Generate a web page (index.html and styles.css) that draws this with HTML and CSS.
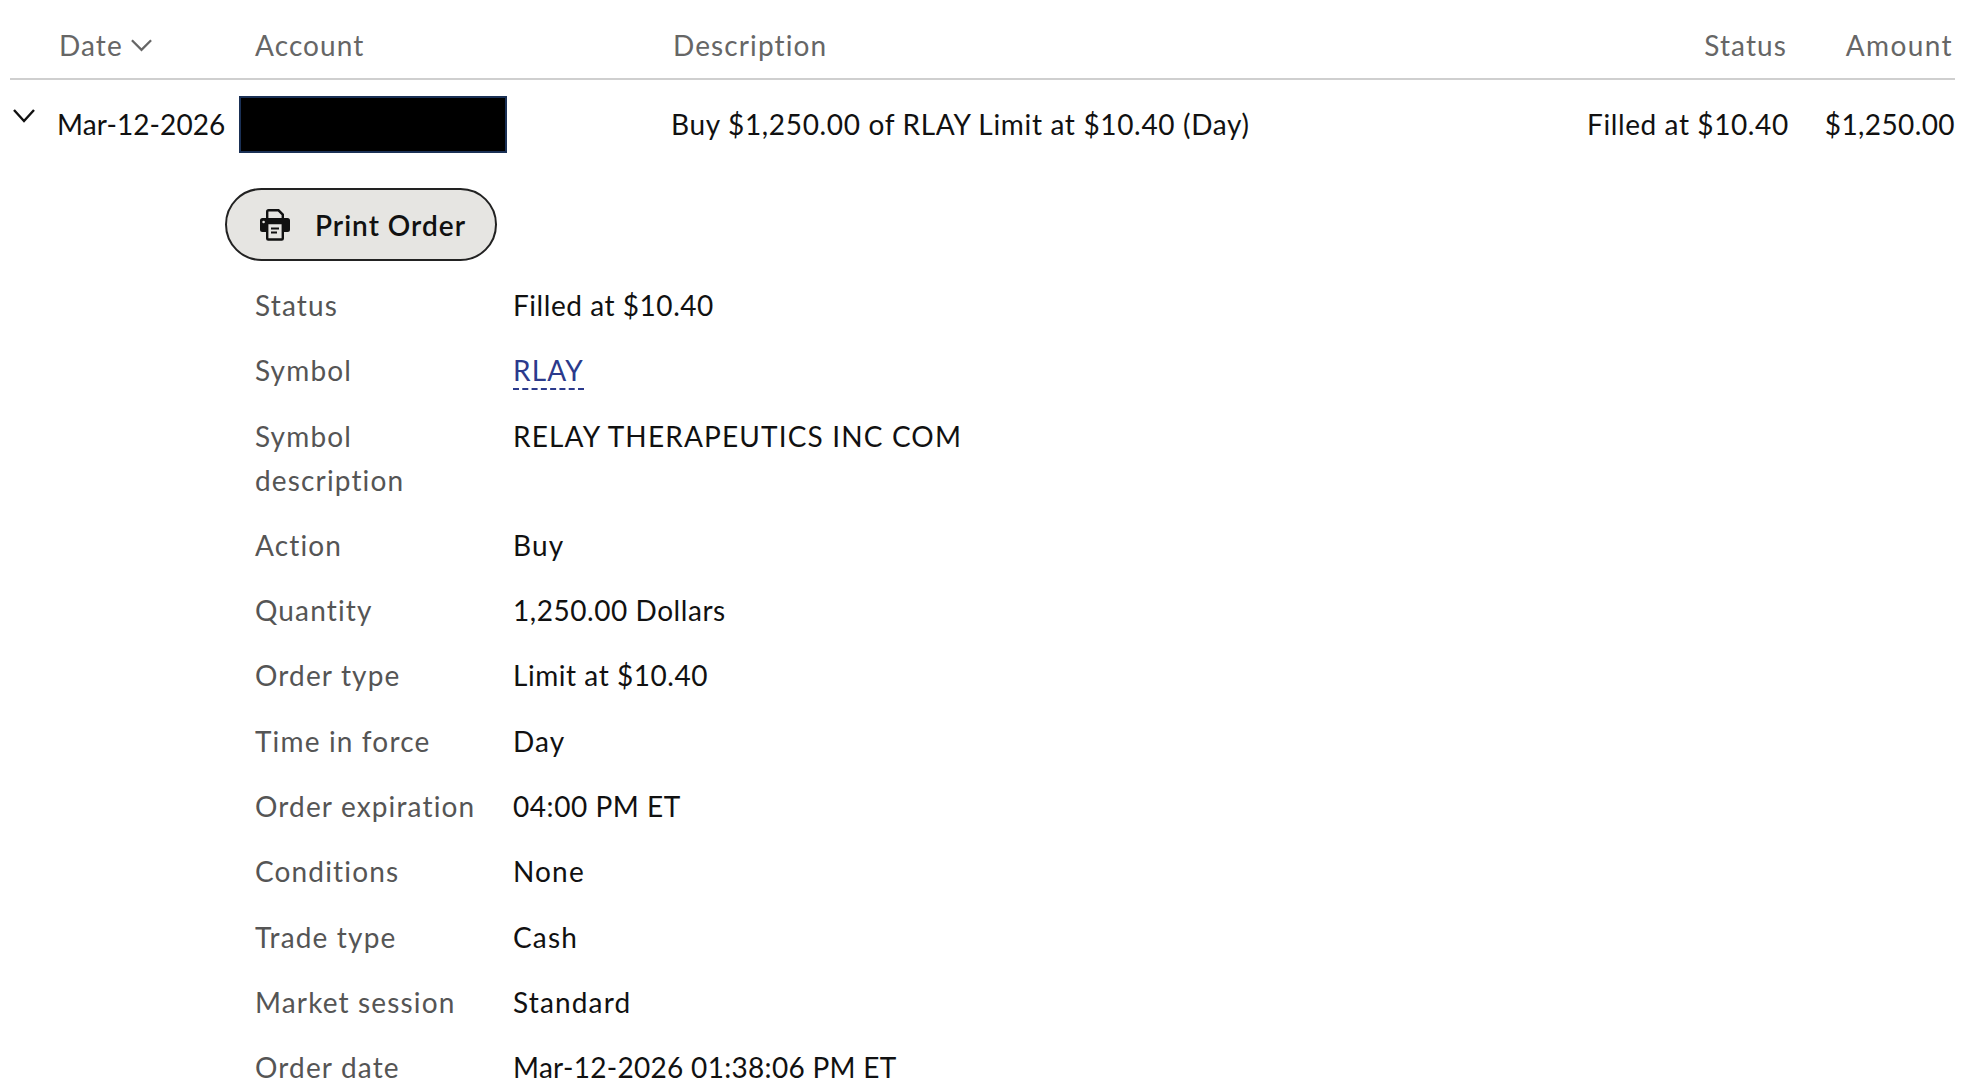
FILE: index.html
```html
<!DOCTYPE html>
<html lang="en">
<head>
<meta charset="utf-8">
<title>Orders</title>
<link rel="stylesheet" href="styles.css">
</head>
<body>
<div class="head">
  <div class="c-date sort">Date
    <svg class="sort-icon" viewBox="0 0 24 14" aria-hidden="true"><path d="M2 2l10 10L22 2"/></svg>
  </div>
  <div class="c-account">Account</div>
  <div class="c-desc">Description</div>
  <div class="c-status">Status</div>
  <div class="c-amount">Amount</div>
</div>
<div class="order">
  <svg class="toggle" viewBox="0 0 24 15" aria-hidden="true"><path d="M2 2l10 11L22 2"/></svg>
  <div class="o-date">Mar-12-2026</div>
  <div class="redact"></div>
  <div class="o-desc">Buy $1,250.00 of RLAY Limit at $10.40 (Day)</div>
  <div class="o-status">Filled at $10.40</div>
  <div class="o-amount">$1,250.00</div>
</div>
<button class="print" type="button">
  <svg class="print-icon" viewBox="0 0 30 32" aria-hidden="true">
    <path class="p-line" d="M7.200 10V2.800A1.500 1.500 0 0 1 8.700 1.300H18.500L22.800 5.600V10"/>
    <path class="p-body" d="M2.500 9h25A2.500 2.500 0 0 1 30 11.500v9a2.500 2.500 0 0 1-2.500 2.500h-25A2.500 2.500 0 0 1 0 20.500v-9A2.500 2.500 0 0 1 2.500 9z"/>
    <circle class="p-dot" cx="3.600" cy="13" r="1.300"/>
    <rect class="p-sheet" x="7.200" y="14" width="15.600" height="16.500" rx="1"/>
    <path class="p-text" d="M11 19.500h8M11 23.500h6"/>
  </svg>
  <span>Print Order</span>
</button>
<dl class="details">
  <div class="row"><dt>Status</dt><dd class="num">Filled at $10.40</dd></div>
  <div class="row"><dt>Symbol</dt><dd><a class="sym" href="#">RLAY</a></dd></div>
  <div class="row"><dt>Symbol description</dt><dd>RELAY THERAPEUTICS INC COM</dd></div>
  <div class="row"><dt>Action</dt><dd>Buy</dd></div>
  <div class="row"><dt>Quantity</dt><dd class="num">1,250.00 Dollars</dd></div>
  <div class="row"><dt>Order type</dt><dd class="num">Limit at $10.40</dd></div>
  <div class="row"><dt>Time in force</dt><dd>Day</dd></div>
  <div class="row"><dt>Order expiration</dt><dd class="num">04:00 PM ET</dd></div>
  <div class="row"><dt>Conditions</dt><dd>None</dd></div>
  <div class="row"><dt>Trade type</dt><dd>Cash</dd></div>
  <div class="row"><dt>Market session</dt><dd>Standard</dd></div>
  <div class="row"><dt>Order date</dt><dd class="stamp">Mar-12-2026 01:38:06 PM ET</dd></div>
</dl>
</body>
</html>
```
FILE: styles.css
```css
html, body {
  margin: 0;
  height: 100%;
  overflow: hidden;
  background: #fff;
}
body {
  font-family: "Lato", "Open Sans", sans-serif;
  font-size: 28px;
  line-height: 44px;
  color: #111;
}
.head {
  display: grid;
  grid-template-columns: 196px 418px 1fr 200px 166px;
  align-items: center;
  margin: 0 27px 0 10px;
  padding: 12px 2px 0 49px;
  height: 66px;
  border-bottom: 2px solid #cfcfcf;
  color: #666;
  letter-spacing: 1.1px;
}
.c-status, .c-amount { text-align: right; }
.c-amount { letter-spacing: 1.4px; }
.sort { display: flex; align-items: center; gap: 7px; }
.sort-icon { width: 23px; height: 14px; }
.sort-icon path, .toggle path {
  fill: none;
  stroke: currentColor;
  stroke-width: 2.4;
}
.order {
  display: flex;
  align-items: flex-start;
  margin: 0 27px 0 0;
  padding: 16px 0 0 12px;
  height: 93px;
  box-sizing: border-box;
}
.toggle { width: 24px; height: 15px; margin-top: 12px; flex: none; }
.o-date { margin-left: 21px; width: 182px; margin-top: 6px; flex: none; letter-spacing: .1px; }
.redact {
  width: 268px;
  height: 57px;
  box-sizing: border-box;
  background: #000;
  border: 2px solid #1a3055;
  flex: none;
}
.o-desc { margin-left: 164px; margin-top: 6px; flex: 1; letter-spacing: .67px; }
.o-status { margin-top: 6px; letter-spacing: .6px; margin-right: 4px; }
.o-amount { margin-top: 6px; margin-left: 32px; letter-spacing: .4px; }
.print {
  display: flex;
  align-items: center;
  gap: 25px;
  margin: 15px 0 0 225px;
  width: 272px;
  height: 73px;
  padding: 0 0 0 33px;
  box-sizing: border-box;
  background: #e6e5e2;
  border: 2px solid #222;
  border-radius: 37px;
  font: 600 28px/44px "Lato", sans-serif;
  letter-spacing: 1px;
  color: #111;
}
.print-icon { width: 30px; height: 32px; flex: none; }
.p-line { fill: none; stroke: #111; stroke-width: 2.4; }
.p-body { fill: #111; }
.p-dot { fill: #e6e5e2; }
.p-sheet { fill: #e6e5e2; stroke: #111; stroke-width: 2.4; }
.p-text { fill: none; stroke: #111; stroke-width: 1.8; }
.details { margin: 22px 0 0 255px; }
.row {
  display: grid;
  grid-template-columns: 258px 1fr;
  padding-bottom: 21.3px;
}
dt { color: #555; width: 225px; letter-spacing: 1.15px; }
dd { margin: 0; letter-spacing: 1.15px; }
dd.num { letter-spacing: .55px; }
dd.stamp { letter-spacing: .3px; }
.sym {
  color: #2b3a8c;
  text-decoration: none;
  border-bottom: 2px dashed #2b3a8c;
  padding-bottom: 1px;
}
```
